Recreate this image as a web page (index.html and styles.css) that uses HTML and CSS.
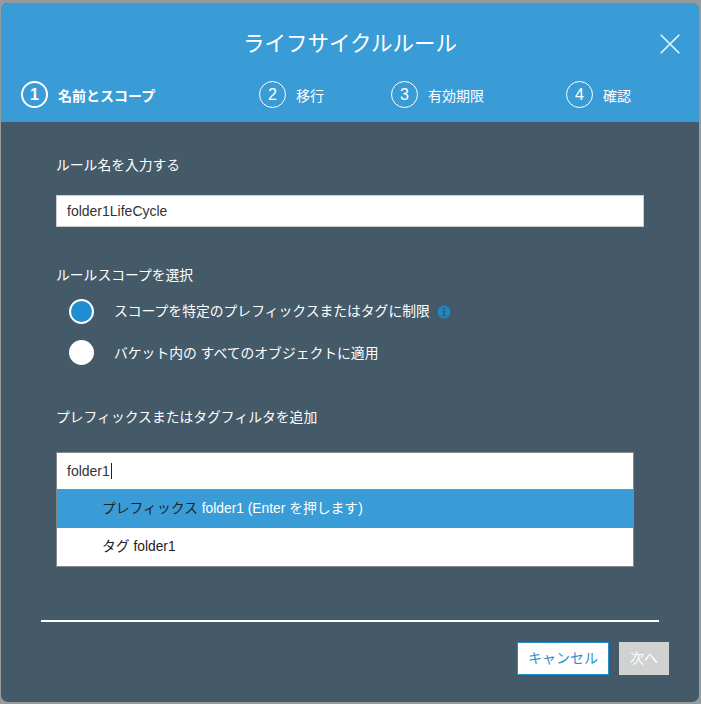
FILE: index.html
```html
<!DOCTYPE html>
<html lang="ja">
<head>
    <meta charset="UTF-8">
    <title>ライフサイクルルール</title>
    <link rel="stylesheet" href="styles.css">
</head>
<body>
    <div class="dialog">
        <div class="dialog-header">
            <div class="title-row">
                <h1 class="title">ライフサイクルルール</h1>
                <svg class="close" width="20" height="20" viewBox="0 0 20 20">
                    <path d="M0.7 0.7 L19.3 19.3 M19.3 0.7 L0.7 19.3" stroke="#fff" stroke-width="1.6" fill="none" opacity="0.9"/>
                </svg>
            </div>
            <div class="steps">
                <div class="step active"><span class="step-num">1</span><span>名前とスコープ</span></div>
                <div class="step"><span class="step-num">2</span><span>移行</span></div>
                <div class="step"><span class="step-num">3</span><span>有効期限</span></div>
                <div class="step"><span class="step-num">4</span><span>確認</span></div>
            </div>
        </div>

        <div class="dialog-body">
            <div class="label">ルール名を入力する</div>
            <div class="text-input">folder1LifeCycle</div>

            <div class="label scope-label">ルールスコープを選択</div>
            <div class="radio-row">
                <span class="radio checked"></span>
                <span class="radio-text">スコープを特定のプレフィックスまたはタグに制限</span>
                <svg class="info" width="14" height="14" viewBox="0 0 14 14">
                    <circle cx="7" cy="7" r="6.5" fill="#1f87c4"/>
                    <rect x="5.9" y="2.6" width="2.3" height="2.1" fill="#445a69"/>
                    <path d="M4.9 5.8 H8.1 V10 H9.2 V11.3 H4.9 V10 H6 V7.1 H4.9 Z" fill="#445a69"/>
                </svg>
            </div>
            <div class="radio-row second">
                <span class="radio"></span>
                <span class="radio-text">バケット内の すべてのオブジェクトに適用</span>
            </div>

            <div class="label filter-label">プレフィックスまたはタグフィルタを追加</div>
            <div class="filter">
                <div class="filter-input">folder1<span class="caret"></span></div>
                <div class="option selected"><span class="dark">プレフィックス</span> folder1 (Enter を押します)</div>
                <div class="option">タグ folder1</div>
            </div>

            <div class="divider"></div>

            <div class="buttons">
                <div class="btn btn-cancel">キャンセル</div>
                <div class="btn btn-next">次へ</div>
            </div>
        </div>
    </div>
</body>
</html>
```

FILE: styles.css
```css
body, html {
    padding: 0;
    margin: 0;
}

body {
    height: 704px;
    overflow: hidden;
    background-color: rgb(150, 155, 158);
    font-family: "Liberation Sans", "Noto Sans CJK JP", sans-serif;
    font-size: 14px;
    color: #fff;
}

.dialog {
    width: 698px;
    height: 699px;
    margin: 3px 0 0 1px;
    border-radius: 7px;
    overflow: hidden;
    background-color: #445a69;
    display: flex;
    flex-direction: column;
}

.dialog-header {
    height: 119px;
    background-color: #3a9cd6;
    box-sizing: border-box;
}

.title-row {
    height: 78px;
    display: flex;
    align-items: center;
    justify-content: center;
    position: relative;
}

.title {
    margin: 0;
    font-size: 21.5px;
    font-weight: normal;
    position: relative;
    top: -1px;
}

.close {
    position: absolute;
    right: 19px;
    top: 31px;
}

.steps {
    display: grid;
    grid-template-columns: 238px 132px 175px 1fr;
    padding-left: 20px;
}

.step {
    display: flex;
    align-items: center;
    gap: 10px;
    height: 27px;
}

.step-num {
    width: 25px;
    height: 25px;
    border: 1px solid #fff;
    border-radius: 50%;
    display: flex;
    align-items: center;
    justify-content: center;
    font-size: 16px;
}

.step.active {
    font-weight: bold;
}

.step.active .step-num {
    border-width: 2px;
    width: 23px;
    height: 23px;
}

.dialog-body {
    flex: 1;
    padding: 34px 30px 0 40px;
}

.label {
    margin-left: 15px;
    line-height: 20px;
    font-size: 13.8px;
}

.text-input {
    width: 576px;
    height: 30px;
    margin: 19px 0 0 15px;
    padding-left: 10px;
    border: 1px solid #ccc;
    background-color: #fff;
    color: #333;
    line-height: 30px;
    box-sizing: content-box;
}

.scope-label {
    margin-top: 39px;
}

.radio-row {
    display: flex;
    align-items: center;
    height: 41px;
    margin-left: 28px;
}

.scope-label + .radio-row {
    margin-top: 5px;
}

.radio {
    width: 25px;
    height: 25px;
    margin-right: 20px;
    border-radius: 50%;
    background-color: #fff;
    box-sizing: border-box;
}

.radio.checked {
    background-color: #1f8ed1;
    border: 2px solid #fff;
}

.radio-text {
    padding-bottom: 3px;
    font-size: 13.8px;
}

.radio-row.second .radio-text {
    padding-bottom: 1px;
}

.info {
    margin-left: 7px;
}

.filter-label {
    margin-top: 35px;
}

.filter {
    width: 576px;
    margin: 24px 0 0 15px;
    border: 1px solid #888;
    background-color: #fff;
    color: #222;
}

.filter-input {
    height: 36px;
    line-height: 36px;
    padding-left: 10px;
    border-bottom: 1px solid #888;
    color: #333;
    display: flex;
    align-items: center;
}

.caret {
    width: 1px;
    height: 16px;
    margin-left: 1px;
    background-color: #222;
}

.option {
    height: 38px;
    line-height: 38px;
    padding-left: 45px;
    font-size: 13.8px;
}

.option.selected {
    background-color: #3a9cd6;
    color: #fff;
}

.dark {
    color: #222;
}

.divider {
    height: 2px;
    margin-top: 53px;
    background-color: #fff;
    width: 618px;
}

.buttons {
    display: flex;
    justify-content: flex-end;
    gap: 10px;
    margin-top: 20px;
    width: 628px;
}

.btn {
    height: 33px;
    line-height: 33px;
    text-align: center;
    box-sizing: border-box;
}

.btn-cancel {
    width: 92px;
    border: 1px solid #1f8ed1;
    line-height: 31px;
    background-color: #fff;
    color: #2b8fcc;
}

.btn-next {
    width: 50px;
    background-color: #d0d2d1;
    color: #fff;
}
```
